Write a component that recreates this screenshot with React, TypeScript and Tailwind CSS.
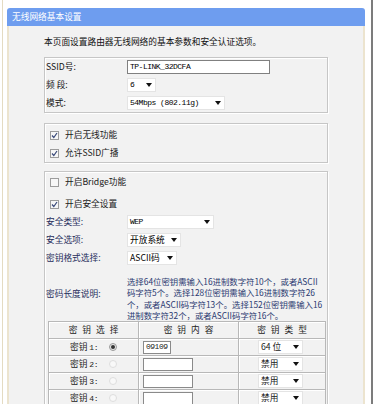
const cn = "font-['Noto_Sans_CJK_SC','Noto_Sans',sans-serif]";
const mono = "font-['Liberation_Mono','Noto_Sans_CJK_SC',monospace] text-[8px] tracking-[-0.5px]";

function Arrow() {
  return (
    <svg width="6" height="4" viewBox="0 0 6 4" className="shrink-0">
      <path d="M0 0h6L3 4z" fill="#111" />
    </svg>
  );
}

function Select({ label, width, isMono }: { label: string; width: string; isMono?: boolean }) {
  return (
    <div
      className={`${width} h-[14px] shrink-0 flex items-center justify-between bg-white border border-[#e4e4e4] pl-[2px] pr-[3px]`}
    >
      <span className={isMono ? mono : "text-[8.7px] leading-none"}>{label}</span>
      <Arrow />
    </div>
  );
}

function Checkbox({ checked }: { checked: boolean }) {
  return (
    <span className="w-[9px] h-[9px] border border-[#9c9c9c] bg-[#f7f7f7] flex items-center justify-center shrink-0">
      {checked && (
        <svg width="7" height="7" viewBox="0 0 7 7">
          <path d="M1 3.5l1.8 2L6 1" stroke="#3a4a7a" strokeWidth="1.2" fill="none" />
        </svg>
      )}
    </span>
  );
}

function Radio({ checked }: { checked: boolean }) {
  return checked ? (
    <span className="w-[8px] h-[8px] rounded-full border border-[#9a9a9a] bg-[#e8e8e8] flex items-center justify-center">
      <span className="w-[4px] h-[4px] rounded-full bg-[#333]" />
    </span>
  ) : (
    <span className="w-[8px] h-[8px] rounded-full border border-[#dedede] bg-[#f8f8f8]" />
  );
}

function Row({ label, children, dark }: { label: string; children: React.ReactNode; dark?: boolean }) {
  return (
    <div className="flex h-[18px] items-center">
      <div
        className={`w-[82px] shrink-0 pl-px text-[8.7px] leading-none ${dark ? "text-[#1f2d5c]" : "text-[#111]"}`}
      >
        {label}
      </div>
      {children}
    </div>
  );
}

function CheckRow({ label, checked }: { label: string; checked: boolean }) {
  return (
    <div className="flex h-[18px] items-center pl-[5px] gap-[6px]">
      <Checkbox checked={checked} />
      <span className="text-[8.7px] leading-none text-[#1a1a1a]">{label}</span>
    </div>
  );
}

const boxCls =
  "w-[284px] border border-[#c6c6c6] shadow-[inset_1px_1px_0_#ffffff,1px_1px_0_#ffffff]";

const keys = [
  { n: "1", checked: true, value: "09109", type: "64 位" },
  { n: "2", checked: false, value: "", type: "禁用" },
  { n: "3", checked: false, value: "", type: "禁用" },
  { n: "4", checked: false, value: "", type: "禁用" },
];

const cell = "border-r border-b border-[#b8b8b8] shadow-[inset_1px_1px_0_#ffffff] flex items-center";

function TitleBar() {
  return (
    <div className="h-[18px] shrink-0 rounded-t-[3px] bg-[#6e9def] flex items-center pl-[5px]">
      <span className="text-[8.7px] leading-none text-white">无线网络基本设置</span>
    </div>
  );
}

export default function App() {
  return (
    <div className={`w-[375px] h-[404px] overflow-hidden bg-white flex ${cn}`}>
      <div className="w-[2px]" />
      <div className="w-px bg-[#e4dbc2]" />
      <div className="w-[4px]" />

      <div className="w-[358px] flex flex-col pt-[8px]">
        <TitleBar />

        <div className="flex-1 border-l-2 border-r-2 border-[#ece4cf] bg-[#f2f2f2] pl-[35px] pt-[10px]">
          <p className="text-[8.7px] leading-[12px] text-[#111]">
            本页面设置路由器无线网络的基本参数和安全认证选项。
          </p>

          {/* basic settings */}
          <div className={`${boxCls} mt-[9px]`}>
            <Row label="SSID号:">
              <div className="w-[143px] h-[14px] border border-[#808080] bg-white flex items-center px-[2px]">
                <span className={mono}>TP-LINK_32DCFA</span>
              </div>
            </Row>
            <Row label="频 段:">
              <Select label="6" width="w-[29px]" isMono />
            </Row>
            <Row label="模式:">
              <Select label="54Mbps (802.11g)" width="w-[98px]" isMono />
            </Row>
          </div>

          {/* wireless switches */}
          <div className={`${boxCls} mt-[10px] pt-[2px]`}>
            <CheckRow label="开启无线功能" checked />
            <CheckRow label="允许SSID广播" checked />
          </div>

          {/* security */}
          <div className={`${boxCls} mt-[8px] pt-px`}>
            <CheckRow label="开启Bridge功能" checked={false} />
            <div className="mt-[4px]">
              <CheckRow label="开启安全设置" checked />
            </div>
            <Row label="安全类型:" dark>
              <Select label="WEP" width="w-[87px]" isMono />
            </Row>
            <Row label="安全选项:" dark>
              <Select label="开放系统" width="w-[54px]" />
            </Row>
            <Row label="密钥格式选择:" dark>
              <Select label="ASCII码" width="w-[50px]" />
            </Row>

            <div className="flex items-center mt-[9px]">
              <div className="w-[82px] shrink-0 pl-px pb-[8px] text-[8.7px] leading-none text-[#1f2d5c]">密码长度说明:</div>
              <div className="text-[8.4px] leading-[11.3px] text-[#2a3970] whitespace-nowrap">
                <div>选择64位密钥需输入16进制数字符10个，或者ASCII</div>
                <div>码字符5个。选择128位密钥需输入16进制数字符26</div>
                <div>个，或者ASCII码字符13个。选择152位密钥需输入16</div>
                <div>进制数字符32个，或者ASCII码字符16个。</div>
              </div>
            </div>

            {/* key table */}
            <div className="ml-[3px] w-[278px] grid grid-cols-[90px_100px_87px] border-l border-t border-[#b8b8b8] text-[8.7px] leading-none text-[#222]">
              <div className={`${cell} h-[17px] justify-center tracking-[5px] pl-[5px]`}>密钥选择</div>
              <div className={`${cell} h-[17px] justify-center tracking-[5px] pl-[5px]`}>密钥内容</div>
              <div className={`${cell} h-[17px] justify-center tracking-[5px] pl-[5px]`}>密钥类型</div>
              {keys.map((k) => (
                <>
                  <div key={`a${k.n}`} className={`${cell} h-[17px] justify-center gap-[11px]`}>
                    <span>
                      密钥 <span className={mono}>{k.n}:</span>
                    </span>
                    <Radio checked={k.checked} />
                  </div>
                  <div key={`b${k.n}`} className={`${cell} h-[17px] pl-[4px]`}>
                    <div
                      className={`${k.value ? "w-[28px]" : "w-[50px]"} h-[13px] border border-[#8a8a8a] bg-white flex items-center px-[2px]`}
                    >
                      <span className={mono}>{k.value}</span>
                    </div>
                  </div>
                  <div key={`c${k.n}`} className={`${cell} h-[17px] pl-[19px]`}>
                    <Select label={k.type} width="w-[45px]" />
                  </div>
                </>
              ))}
            </div>
            <div className="h-[20px]" />
          </div>
        </div>
      </div>

      <div className="w-[6px]" />
      <div className="w-[2px] bg-[#7c7c7c]" />
    </div>
  );
}
